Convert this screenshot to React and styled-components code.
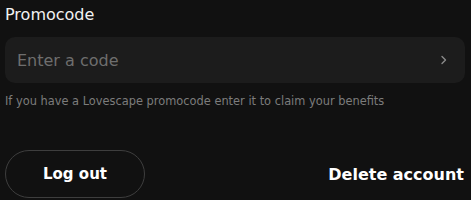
import React, { useState } from "react";
import styled, { createGlobalStyle } from "styled-components";

const Global = createGlobalStyle`
  html, body {
    margin: 0;
    padding: 0;
    background: #111111;
  }
  body {
    font-family: "DejaVu Sans", "Noto Sans", sans-serif;
    color: #ffffff;
  }
`;

function App() {
  const [code, setCode] = useState("");

  return (
    <>
      <Global />
      <Page>
        <Section>
          <Label>Promocode</Label>
          <Field>
            <Input
              type="text"
              placeholder="Enter a code"
              value={code}
              onChange={(e) => setCode(e.target.value)}
            />
            <Arrow>
              <svg width="10" height="12" viewBox="0 0 10 12" fill="none">
                <path d="M3 2.5L6.5 6L3 9.5" stroke="#8a8a8a" strokeWidth="1.4" strokeLinecap="round" strokeLinejoin="round" />
              </svg>
            </Arrow>
          </Field>
          <Hint>If you have a Lovescape promocode enter it to claim your benefits</Hint>
        </Section>
        <Actions>
          <LogoutBtn>Log out</LogoutBtn>
          <DeleteBtn>Delete account</DeleteBtn>
        </Actions>
      </Page>
    </>
  );
}

export default App;

let Page = styled.div`
  width: 460px;
  padding: 4px 0 0 5px;
  display: flex;
  flex-direction: column;
`;

let Section = styled.div`
  display: flex;
  flex-direction: column;
`;

let Label = styled.div`
  font-size: 16px;
  line-height: 22px;
  color: #f2f2f2;
`;

let Field = styled.div`
  margin-top: 11px;
  height: 46px;
  background: #1c1c1c;
  border-radius: 10px;
  display: flex;
  align-items: center;
  padding: 0 16px 0 12px;
`;

let Input = styled.input`
  flex: 1;
  padding: 0;
  background: transparent;
  border: none;
  outline: none;
  font-family: inherit;
  font-size: 16px;
  color: #fff;
  &::placeholder {
    color: #6e6e6e;
  }
`;

let Arrow = styled.span`
  display: flex;
  align-items: center;
`;

let Hint = styled.div`
  margin-top: 10px;
  font-size: 11.4px;
  line-height: 16px;
  color: #7c7c7c;
`;

let Actions = styled.div`
  margin-top: 41px;
  display: flex;
  align-items: center;
  justify-content: space-between;
`;

let LogoutBtn = styled.button`
  width: 140px;
  height: 48px;
  border-radius: 24px;
  border: 1px solid #3e3e3e;
  background: transparent;
  color: #fff;
  font-family: inherit;
  font-weight: bold;
  font-size: 15px;
`;

let DeleteBtn = styled.button`
  background: none;
  border: none;
  padding: 0 1px 0 0;
  color: #fff;
  font-family: inherit;
  font-weight: bold;
  font-size: 16px;
`;
